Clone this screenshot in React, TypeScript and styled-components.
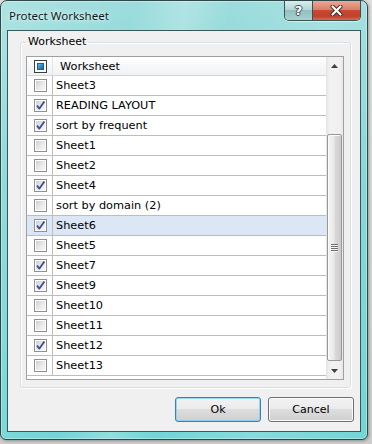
import React from 'react';
import styled, { createGlobalStyle } from 'styled-components';

interface ISheet {
  name: string;
  checked: boolean;
  selected?: boolean;
}

const sheets: ISheet[] = [
  { name: 'Sheet3', checked: false },
  { name: 'READING LAYOUT', checked: true },
  { name: 'sort by frequent', checked: true },
  { name: 'Sheet1', checked: false },
  { name: 'Sheet2', checked: false },
  { name: 'Sheet4', checked: true },
  { name: 'sort by domain (2)', checked: false },
  { name: 'Sheet6', checked: true, selected: true },
  { name: 'Sheet5', checked: false },
  { name: 'Sheet7', checked: true },
  { name: 'Sheet9', checked: true },
  { name: 'Sheet10', checked: false },
  { name: 'Sheet11', checked: false },
  { name: 'Sheet12', checked: true },
  { name: 'Sheet13', checked: false },
];

const GlobalStyle = createGlobalStyle`
  html, body {
    margin: 0;
    padding: 0;
  }
  body {
    width: 372px;
    height: 444px;
    overflow: hidden;
    background: linear-gradient(#dedede, #cdcdcd);
    font-family: 'DejaVu Sans', Verdana, sans-serif;
  }
`;

/** 체크박스 */
const CheckBox: React.FC<{ checked: boolean }> = ({ checked }) => (
  <BoxOuter>
    <BoxInner>
      {checked && (
        <svg width="11" height="11" viewBox="0 0 11 11" aria-hidden="true">
          <path
            d="M2 5.6 L4.4 8.6 L9.4 1.4"
            fill="none"
            stroke="#3b4f8c"
            strokeWidth="1.8"
            strokeLinejoin="round"
          />
        </svg>
      )}
    </BoxInner>
  </BoxOuter>
);

const App: React.FC = () => {
  return (
    <>
      <GlobalStyle />
      <Window>
        <TitleBar>
          <Title>Protect Worksheet</Title>
          <CaptionButtons>
            <HelpButton>?</HelpButton>
            <CloseButton>
              <svg width="13" height="11" viewBox="0 0 13 11" aria-hidden="true">
                <path d="M2.5 1.5 L10.5 9.5 M10.5 1.5 L2.5 9.5" stroke="#3a2a2a" strokeWidth="4" strokeLinecap="round" />
                <path d="M2.5 1.5 L10.5 9.5 M10.5 1.5 L2.5 9.5" stroke="#fff" strokeWidth="2.2" strokeLinecap="round" />
              </svg>
            </CloseButton>
          </CaptionButtons>
        </TitleBar>
        <Client>
          <Group>
            <Legend>Worksheet</Legend>
            <List>
              <Rows>
                <HeaderRow>
                  <CheckCell $header>
                    <HeaderBox>
                      <HeaderFill />
                    </HeaderBox>
                  </CheckCell>
                  <HeaderText>Worksheet</HeaderText>
                </HeaderRow>
                {sheets.map(s => (
                  <Row key={s.name} $selected={!!s.selected}>
                    <CheckCell>
                      <CheckBox checked={s.checked} />
                    </CheckCell>
                    <CellText>{s.name}</CellText>
                  </Row>
                ))}
              </Rows>
              <ScrollBar>
                <ArrowButton>
                  <svg width="7" height="4" viewBox="0 0 7 4" aria-hidden="true">
                    <path d="M0 4 L3.5 0 L7 4 Z" fill="#3f3f3f" />
                  </svg>
                </ArrowButton>
                <Track>
                  <Thumb>
                    <Grip />
                    <Grip />
                    <Grip />
                    <Grip />
                  </Thumb>
                </Track>
                <ArrowButton>
                  <svg width="7" height="4" viewBox="0 0 7 4" aria-hidden="true">
                    <path d="M0 0 L7 0 L3.5 4 Z" fill="#3f3f3f" />
                  </svg>
                </ArrowButton>
              </ScrollBar>
            </List>
          </Group>
          <ButtonRow>
            <DialogButton $default>Ok</DialogButton>
            <DialogButton>Cancel</DialogButton>
          </ButtonRow>
        </Client>
      </Window>
    </>
  );
};

const Window = styled.div`
  box-sizing: border-box;
  width: 368px;
  height: 440px;
  display: flex;
  flex-direction: column;
  padding: 0 6px 7px;
  border: 1px solid #2e4849;
  border-radius: 7px 7px 6px 6px;
  background:
    linear-gradient(100deg, rgba(255, 255, 255, 0.18) 0%, rgba(255, 255, 255, 0) 30%, rgba(255, 255, 255, 0.22) 42%, rgba(255, 255, 255, 0) 52%, rgba(255, 255, 255, 0.15) 75%, rgba(255, 255, 255, 0) 100%),
    linear-gradient(#9cdcdc, #7fd6d6 40%, #70d6d6);
  box-shadow: inset 0 0 0 1px rgba(255, 255, 255, 0.35), 1px 1px 3px rgba(0, 0, 0, 0.3);
`;

const TitleBar = styled.div`
  height: 29px;
  display: flex;
  align-items: flex-start;
`;

const Title = styled.div`
  flex: 1;
  padding: 7px 0 0 2px;
  font-family: 'Noto Sans', 'Open Sans', sans-serif;
  font-size: 11.5px;
  line-height: 15px;
  color: #0b1a1a;
  text-shadow: 0 0 6px rgba(255, 255, 255, 0.9), 0 0 2px rgba(255, 255, 255, 0.7);
`;

const CaptionButtons = styled.div`
  display: flex;
  height: 19px;
  border: 1px solid #3a5252;
  border-top: none;
  border-radius: 0 0 5px 5px;
  overflow: hidden;
  box-shadow: 0 1px 0 rgba(255, 255, 255, 0.5);
`;

const HelpButton = styled.div`
  width: 27px;
  display: flex;
  align-items: center;
  justify-content: center;
  border-right: 1px solid #3a5252;
  background: linear-gradient(#d8eeee, #b4d6d6 45%, #94bfbf 50%, #a8d0d0);
  font-family: 'DejaVu Sans', sans-serif;
  font-weight: bold;
  font-size: 13px;
  color: #fff;
  text-shadow: -1px 0 #3d4b55, 1px 0 #3d4b55, 0 -1px #3d4b55, 0 1px #3d4b55;
`;

const CloseButton = styled.div`
  width: 47px;
  display: flex;
  align-items: center;
  justify-content: center;
  background: linear-gradient(#e8a898, #dc7f6a 45%, #c84a30 50%, #c0402a 80%, #d86a50);
`;

const Client = styled.div`
  flex: 1;
  display: flex;
  flex-direction: column;
  border: 1px solid #3b5858;
  background: #f0f0f0;
`;

const Group = styled.fieldset`
  box-sizing: border-box;
  width: 331px;
  height: 353px;
  margin: 4px 0 0 12px;
  padding: 7px 6px 7px 5px;
  border: 1px solid #d5dfe5;
  border-radius: 3px;
  box-shadow: inset 1px 1px 0 #fff, 1px 1px 0 #fff;
`;

const Legend = styled.legend`
  padding: 0 2px;
  font-size: 11px;
  line-height: 14px;
  color: #000;
`;

const List = styled.div`
  box-sizing: border-box;
  width: 318px;
  height: 324px;
  display: flex;
  border: 1px solid #a0a0a0;
  background: #fff;
`;

const Rows = styled.div`
  flex: 1;
  display: flex;
  flex-direction: column;
`;

const HeaderRow = styled.div`
  height: 18px;
  display: flex;
  border-bottom: 1px solid #d5d5d5;
  background: linear-gradient(#ffffff, #f7f8f9 50%, #f1f2f4);
`;

const Row = styled.div<{ $selected: boolean }>`
  height: 19px;
  display: flex;
  border-bottom: 1px solid #bdbdbd;
  background: ${p => (p.$selected ? '#dce7f5' : '#fff')};
`;

const CheckCell = styled.div<{ $header?: boolean }>`
  width: 26px;
  display: flex;
  align-items: center;
  padding-left: 7px;
  box-sizing: border-box;
  border-right: 1px solid ${p => (p.$header ? '#e3e5e8' : '#bdbdbd')};
`;

const CellText = styled.div`
  padding: 1px 0 0 3px;
  font-size: 11.3px;
  line-height: 18px;
  color: #000;
  white-space: nowrap;
`;

const HeaderText = styled(CellText)`
  padding-left: 7px;
  line-height: 17px;
`;

const BoxOuter = styled.span`
  box-sizing: border-box;
  width: 13px;
  height: 13px;
  padding: 1px;
  border: 1px solid #8e8f8f;
  background: #fff;
  display: flex;
`;

const BoxInner = styled.span`
  flex: 1;
  display: flex;
  align-items: center;
  justify-content: center;
  background: linear-gradient(135deg, #cdd0d4, #e6e7e9 50%, #f8f8f8);
  overflow: visible;
  svg {
    margin: -1px;
  }
`;

const HeaderBox = styled.span`
  box-sizing: border-box;
  width: 13px;
  height: 13px;
  padding: 2px;
  border: 1px solid #3a3f44;
  background: #fff;
  display: flex;
`;

const HeaderFill = styled.span`
  flex: 1;
  border: 1px solid #1f5f8f;
  background: linear-gradient(135deg, #5fb8e6, #2a86c4 60%, #1a64a0);
`;

const ScrollBar = styled.div`
  width: 17px;
  display: flex;
  flex-direction: column;
  background: linear-gradient(90deg, #e3e3e3, #f1f1f1 20%, #f1f1f1 80%, #e8e8e8);
`;

const ArrowButton = styled.div`
  height: 17px;
  display: flex;
  align-items: center;
  justify-content: center;
`;

const Track = styled.div`
  flex: 1;
  display: flex;
  flex-direction: column;
  padding: 60px 1px 1px 1px;
`;

const Thumb = styled.div`
  box-sizing: border-box;
  flex: 1;
  display: flex;
  flex-direction: column;
  align-items: center;
  justify-content: center;
  gap: 1px;
  border: 1px solid #979797;
  border-radius: 2px;
  background: linear-gradient(90deg, #f4f4f4, #e9e9e9 45%, #d9d9d9 55%, #cbcbcb);
  box-shadow: inset 1px 1px 0 #fbfbfb;
`;

const Grip = styled.span`
  width: 7px;
  height: 1px;
  background: #6f6f6f;
  box-shadow: 0 1px 0 #f6f6f6;
`;

const ButtonRow = styled.div`
  display: flex;
  justify-content: flex-end;
  gap: 7px;
  margin-top: 9px;
  padding-right: 6px;
`;

const DialogButton = styled.button<{ $default?: boolean }>`
  box-sizing: border-box;
  width: 86px;
  height: 25px;
  padding: 0;
  border: 1px solid ${p => (p.$default ? '#3c7fb1' : '#707070')};
  border-radius: 3px;
  background: linear-gradient(#f2f2f2, #ebebeb 50%, #dddddd 50%, #cfcfcf);
  box-shadow: inset 0 0 0 1px ${p => (p.$default ? 'rgba(120, 205, 245, 0.75)' : '#fbfbfb')};
  font-family: 'DejaVu Sans', Verdana, sans-serif;
  font-size: 11px;
  color: #000;
`;

export default App;
